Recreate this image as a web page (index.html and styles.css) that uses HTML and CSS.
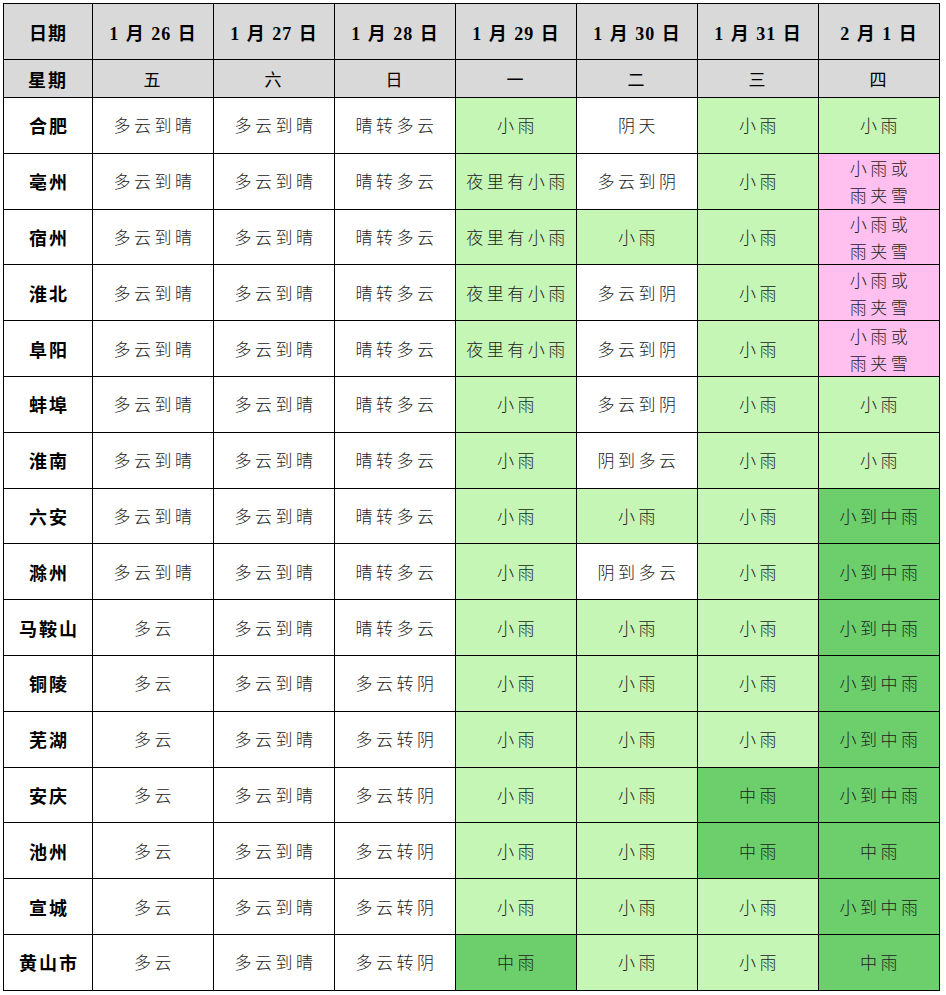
FILE: index.html
```html
<!DOCTYPE html>
<html lang="zh-CN">
<head>
<meta charset="utf-8">
<title>安徽天气预报</title>
<link rel="stylesheet" href="styles.css">
</head>
<body>
<table class="wx">
  <colgroup>
    <col class="c-city">
    <col class="c-day"><col class="c-day"><col class="c-day"><col class="c-day"><col class="c-day"><col class="c-day"><col class="c-day">
  </colgroup>
  <thead>
    <tr class="r-date">
      <th>日期</th><th>1 月 26 日</th><th>1 月 27 日</th><th>1 月 28 日</th><th>1 月 29 日</th><th>1 月 30 日</th><th>1 月 31 日</th><th>2 月 1 日</th>
    </tr>
    <tr class="r-week">
      <th>星期</th><th>五</th><th>六</th><th>日</th><th>一</th><th>二</th><th>三</th><th>四</th>
    </tr>
  </thead>
  <tbody>
    <tr><th>合肥</th><td>多云到晴</td><td>多云到晴</td><td>晴转多云</td><td class="lg">小雨</td><td>阴天</td><td class="lg">小雨</td><td class="lg">小雨</td></tr>
    <tr><th>亳州</th><td>多云到晴</td><td>多云到晴</td><td>晴转多云</td><td class="lg">夜里有小雨</td><td>多云到阴</td><td class="lg">小雨</td><td class="pk">小雨或<br>雨夹雪</td></tr>
    <tr><th>宿州</th><td>多云到晴</td><td>多云到晴</td><td>晴转多云</td><td class="lg">夜里有小雨</td><td class="lg">小雨</td><td class="lg">小雨</td><td class="pk">小雨或<br>雨夹雪</td></tr>
    <tr><th>淮北</th><td>多云到晴</td><td>多云到晴</td><td>晴转多云</td><td class="lg">夜里有小雨</td><td>多云到阴</td><td class="lg">小雨</td><td class="pk">小雨或<br>雨夹雪</td></tr>
    <tr><th>阜阳</th><td>多云到晴</td><td>多云到晴</td><td>晴转多云</td><td class="lg">夜里有小雨</td><td>多云到阴</td><td class="lg">小雨</td><td class="pk">小雨或<br>雨夹雪</td></tr>
    <tr><th>蚌埠</th><td>多云到晴</td><td>多云到晴</td><td>晴转多云</td><td class="lg">小雨</td><td>多云到阴</td><td class="lg">小雨</td><td class="lg">小雨</td></tr>
    <tr><th>淮南</th><td>多云到晴</td><td>多云到晴</td><td>晴转多云</td><td class="lg">小雨</td><td>阴到多云</td><td class="lg">小雨</td><td class="lg">小雨</td></tr>
    <tr><th>六安</th><td>多云到晴</td><td>多云到晴</td><td>晴转多云</td><td class="lg">小雨</td><td class="lg">小雨</td><td class="lg">小雨</td><td class="dg">小到中雨</td></tr>
    <tr><th>滁州</th><td>多云到晴</td><td>多云到晴</td><td>晴转多云</td><td class="lg">小雨</td><td>阴到多云</td><td class="lg">小雨</td><td class="dg">小到中雨</td></tr>
    <tr><th>马鞍山</th><td>多云</td><td>多云到晴</td><td>晴转多云</td><td class="lg">小雨</td><td class="lg">小雨</td><td class="lg">小雨</td><td class="dg">小到中雨</td></tr>
    <tr><th>铜陵</th><td>多云</td><td>多云到晴</td><td>多云转阴</td><td class="lg">小雨</td><td class="lg">小雨</td><td class="lg">小雨</td><td class="dg">小到中雨</td></tr>
    <tr><th>芜湖</th><td>多云</td><td>多云到晴</td><td>多云转阴</td><td class="lg">小雨</td><td class="lg">小雨</td><td class="lg">小雨</td><td class="dg">小到中雨</td></tr>
    <tr><th>安庆</th><td>多云</td><td>多云到晴</td><td>多云转阴</td><td class="lg">小雨</td><td class="lg">小雨</td><td class="dg">中雨</td><td class="dg">小到中雨</td></tr>
    <tr><th>池州</th><td>多云</td><td>多云到晴</td><td>多云转阴</td><td class="lg">小雨</td><td class="lg">小雨</td><td class="dg">中雨</td><td class="dg">中雨</td></tr>
    <tr><th>宣城</th><td>多云</td><td>多云到晴</td><td>多云转阴</td><td class="lg">小雨</td><td class="lg">小雨</td><td class="lg">小雨</td><td class="dg">小到中雨</td></tr>
    <tr><th>黄山市</th><td>多云</td><td>多云到晴</td><td>多云转阴</td><td class="dg">中雨</td><td class="lg">小雨</td><td class="lg">小雨</td><td class="dg">中雨</td></tr>
  </tbody>
</table>
</body>
</html>
```

FILE: styles.css
```css
html, body {
  margin: 0;
  padding: 0;
  background: #ffffff;
}

.wx {
  margin: 3px 0 0 3px;
  border-collapse: collapse;
  table-layout: fixed;
  width: 937px;
  font-family: "Noto Sans CJK SC", "Liberation Serif", sans-serif;
  color: #000;
}

.c-city { width: 89px; }
.c-day { width: 121px; }

.wx th,
.wx td {
  border: 1px solid #000;
  padding: 0;
  text-align: center;
  vertical-align: middle;
}

.wx td {
  font-size: 17px;
  font-weight: 300;
  letter-spacing: 3.5px;
  line-height: 22px;
  color: #222;
  padding-left: 3px;
}

.wx td.pk {
  line-height: 27px;
}

.wx tbody th {
  font-size: 18px;
  font-weight: 700;
  letter-spacing: 2px;
  padding-left: 2px;
}

.wx tbody tr {
  height: 55.8px;
}

.r-date {
  height: 56px;
}

.r-date th {
  background: #d9d9d9;
  font-family: "Liberation Serif", "Noto Sans CJK SC", serif;
  font-size: 18px;
  font-weight: 700;
  letter-spacing: 1px;
  word-spacing: 1px;
}

.r-week {
  height: 38px;
}

.r-week th {
  background: #d9d9d9;
  font-size: 17px;
  font-weight: 400;
  letter-spacing: 2px;
}

.r-date th:first-child,
.r-week th:first-child {
  font-family: "Noto Sans CJK SC", sans-serif;
  font-weight: 700;
  font-size: 18px;
}

.lg { background: #c6f6b6; }
.dg { background: #6ccf6c; }
.pk { background: #ffc0f0; }
```
